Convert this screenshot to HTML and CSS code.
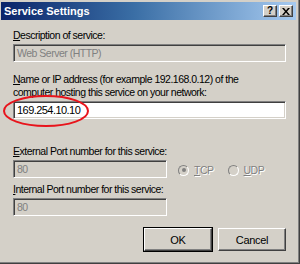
FILE: index.html
```html
<!DOCTYPE html>
<html lang="en">
<head>
  <meta charset="UTF-8" />
  <title>Service Settings</title>
  <link rel="stylesheet" href="styles.css">
</head>
<body>
  <div class="dialog">
    <div class="titlebar">
      <span class="title">Service Settings</span>
      <div class="caption-buttons">
        <span class="cap-btn">?</span>
        <span class="cap-btn close">
          <svg width="8" height="7" viewBox="0 0 8 7"><path d="M0 0h2l2 2.5L6 0h2L5 3.5 8 7H6L4 4.5 2 7H0l3-3.5z" fill="#000"/></svg>
        </span>
      </div>
    </div>

    <div class="content">
      <div class="label label-first"><u>D</u>escription of service:</div>
      <div class="field disabled">Web Server (HTTP)</div>

      <div class="label label-two"><u>N</u>ame or IP address (for example 192.168.0.12) of the<br>computer hosting this service on your network:</div>
      <div class="field-wrap">
        <div class="field active">169.254.10.10</div>
        <svg class="highlight" width="88" height="34" viewBox="0 0 88 34"><ellipse cx="44" cy="17" rx="42" ry="15" fill="none" stroke="#e8141c" stroke-width="2"/></svg>
      </div>

      <div class="label label-ports"><u>E</u>xternal Port number for this service:</div>
      <div class="port-row">
        <div class="field disabled short">80</div>
        <div class="radios">
          <span class="radio checked"><span class="dot"></span></span><span class="radio-text"><u>T</u>CP</span>
          <span class="radio"></span><span class="radio-text"><u>U</u>DP</span>
        </div>
      </div>

      <div class="label label-int"><u>I</u>nternal Port number for this service:</div>
      <div class="field disabled short">80</div>

      <div class="buttons">
        <button class="btn default">OK</button>
        <button class="btn">Cancel</button>
      </div>
    </div>
  </div>
</body>
</html>
```

FILE: styles.css
```css
* {
  box-sizing: border-box;
}

body {
  margin: 0;
  background: #d4d0c8;
  font-family: 'Liberation Sans', Arial, sans-serif;
  font-size: 10.5px;
  letter-spacing: -0.5px;
  color: #000;
}

.dialog {
  width: 300px;
  height: 264px;
  background: #d4d0c8;
  padding: 2px 3px 0 1px;
  border-right: 1px solid #404040;
  border-bottom: 1px solid #404040;
  box-shadow: inset -1px -1px 0 #808080;
  position: relative;
}

.titlebar {
  height: 18px;
  display: flex;
  align-items: center;
  justify-content: space-between;
  padding: 0 3px 0 3px;
  background: linear-gradient(to right, #0a246a, #3a6ea5 45%, #a6caf0);
}

.title {
  color: #fff;
  font-weight: bold;
  font-size: 11px;
  letter-spacing: 0;
}

.caption-buttons {
  display: flex;
  gap: 2px;
}

.cap-btn {
  width: 14px;
  height: 12px;
  background: #d4d0c8;
  border-top: 1px solid #fff;
  border-left: 1px solid #fff;
  border-right: 1px solid #404040;
  border-bottom: 1px solid #404040;
  box-shadow: inset -1px -1px 0 #808080;
  display: flex;
  align-items: center;
  justify-content: center;
  font-weight: bold;
  font-size: 10px;
  letter-spacing: 0;
  line-height: 1;
}

.content {
  padding: 0 10px 0 12px;
}

.label {
  line-height: 13px;
}

.label-first {
  margin-top: 9px;
}

.label-two {
  margin-top: 11px;
}

.label-ports {
  margin-top: 26px;
}

.label-int {
  margin-top: 5px;
}

.field {
  height: 18px;
  margin-top: 2px;
  padding: 1px 3px;
  line-height: 14px;
  border-top: 1px solid #808080;
  border-left: 1px solid #808080;
  border-right: 1px solid #fff;
  border-bottom: 1px solid #fff;
  box-shadow: inset 1px 1px 0 #404040, inset -1px -1px 0 #d4d0c8;
  white-space: nowrap;
}

.field.disabled {
  background: #d4d0c8;
  color: #808080;
}

.field.active {
  background: #fff;
  color: #000;
  font-size: 11px;
  letter-spacing: -0.55px;
}

.field.short {
  width: 154px;
}

.field-wrap {
  position: relative;
}

.highlight {
  position: absolute;
  left: -11px;
  top: -7px;
}

.port-row {
  display: flex;
  align-items: center;
}

.radios {
  display: flex;
  align-items: center;
  margin-left: 11px;
  margin-top: 4px;
  color: #808080;
}

.radio {
  width: 11px;
  height: 11px;
  border-radius: 50%;
  border: 1px solid #808080;
  border-right-color: #fff;
  border-bottom-color: #fff;
  background: #d4d0c8;
  display: flex;
  align-items: center;
  justify-content: center;
}

.radio .dot {
  width: 4px;
  height: 4px;
  border-radius: 50%;
  background: #808080;
}

.radio-text {
  margin-left: 5px;
  margin-right: 14px;
  text-shadow: 1px 1px 0 #fff;
}

.buttons {
  display: flex;
  justify-content: flex-end;
  gap: 6px;
  margin-top: 12px;
}

.btn {
  width: 68px;
  height: 23px;
  padding: 0;
  background: #d4d0c8;
  font-family: 'Liberation Sans', Arial, sans-serif;
  font-size: 11px;
  letter-spacing: -0.3px;
  color: #000;
  border-top: 1px solid #fff;
  border-left: 1px solid #fff;
  border-right: 1px solid #404040;
  border-bottom: 1px solid #404040;
  box-shadow: inset -1px -1px 0 #808080;
}

.btn.default {
  outline: 1px solid #000;
}
```
